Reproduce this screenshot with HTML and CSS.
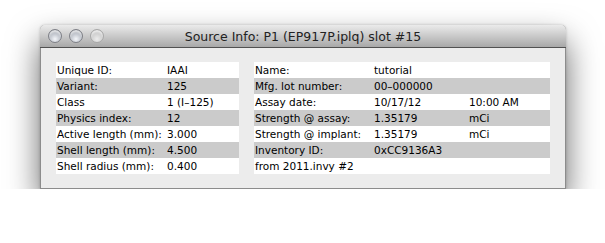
FILE: index.html
```html
<!DOCTYPE html>
<html lang="en">
<head>
    <meta charset="UTF-8">
    <title>Source Info</title>
    <link rel="stylesheet" href="styles.css">
</head>
<body>
    <div class="window">
        <div class="title-bar">
            <div class="lights">
                <span class="light"></span>
                <span class="light"></span>
                <span class="light off"></span>
            </div>
            <div class="title">Source Info: P1 (EP917P.iplq) slot #15</div>
        </div>
        <div class="content">
            <div class="table left">
                <div class="row"><span>Unique ID:</span><span>IAAI</span></div>
                <div class="row"><span>Variant:</span><span>125</span></div>
                <div class="row"><span>Class</span><span>1 (I&#8211;125)</span></div>
                <div class="row"><span>Physics index:</span><span>12</span></div>
                <div class="row"><span>Active length (mm):</span><span>3.000</span></div>
                <div class="row"><span>Shell length (mm):</span><span>4.500</span></div>
                <div class="row"><span>Shell radius (mm):</span><span>0.400</span></div>
            </div>
            <div class="table right">
                <div class="row"><span>Name:</span><span>tutorial</span><span></span></div>
                <div class="row"><span>Mfg. lot number:</span><span>00&#8211;000000</span><span></span></div>
                <div class="row"><span>Assay date:</span><span>10/17/12</span><span>10:00 AM</span></div>
                <div class="row"><span>Strength @ assay:</span><span>1.35179</span><span>mCi</span></div>
                <div class="row"><span>Strength @ implant:</span><span>1.35179</span><span>mCi</span></div>
                <div class="row"><span>Inventory ID:</span><span>0xCC9136A3</span><span></span></div>
                <div class="row"><span>from 2011.invy #2</span><span></span><span></span></div>
            </div>
        </div>
    </div>
</body>
</html>
```

FILE: styles.css
```css
body {
    margin: 0;
    padding: 0;
    background-color: white;
    font-family: "DejaVu Sans", sans-serif;
    color: black;
}
.window {
    margin: 25px 0 0 40px;
    width: 524px;
    border: 1px solid #8c8c8c;
    border-top: none;
    border-radius: 5px 5px 0 0;
    background-color: #ececec;
    box-shadow: 0 16px 32px rgba(0, 0, 0, 0.6), 0 0 3px rgba(0, 0, 0, 0.2);
}
.title-bar {
    position: relative;
    height: 22px;
    border-radius: 5px 5px 0 0;
    background: linear-gradient(#ebebeb, #a8a8a8);
    border-bottom: 1px solid #515151;
    margin: 0 -1px;
    display: flex;
    align-items: center;
    justify-content: center;
}
.lights {
    position: absolute;
    left: 8px;
    top: 4px;
    display: flex;
    gap: 7px;
}
.light {
    width: 14px;
    height: 14px;
    border-radius: 50%;
    box-sizing: border-box;
    border: 1px solid #7d7f86;
    background: radial-gradient(circle at 50% 75%, #f4f6fa 0, #c4c8d0 45%, #8d9199 100%);
    box-shadow: inset 0 2px 2px rgba(255, 255, 255, 0.7);
}
.light.off {
    border-color: #a8a8a8;
    background: radial-gradient(circle at 50% 75%, #ececec 0, #d0d0d0 50%, #b4b4b4 100%);
}
.title {
    font-size: 12.5px;
    color: #222;
}
.content {
    display: flex;
    gap: 15px;
    padding: 14px 15px 14px 15px;
}
.table {
    background-color: white;
    font-size: 10.5px;
}
.left {
    width: 183px;
}
.right {
    width: 296px;
}
.row {
    display: grid;
    height: 16px;
    align-items: center;
    padding-left: 1px;
    white-space: nowrap;
}
.left .row {
    grid-template-columns: 110px 1fr;
}
.right .row {
    grid-template-columns: 119px 95px 1fr;
}
.row:nth-child(even) {
    background-color: #cbcbcb;
}
```
